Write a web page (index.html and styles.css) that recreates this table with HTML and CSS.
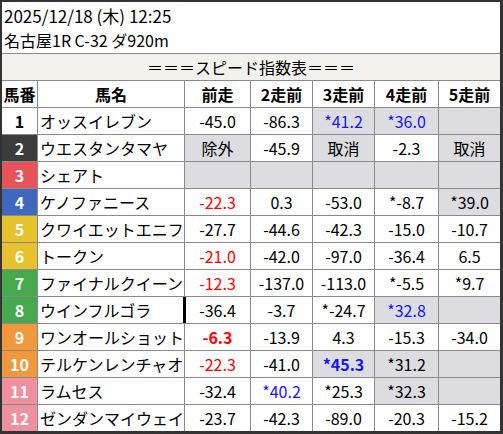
FILE: index.html
```html
<!DOCTYPE html>
<html lang="ja">
<head>
<meta charset="utf-8">
<title>スピード指数表</title>
<link rel="stylesheet" href="styles.css">
</head>
<body>
<div class="sheet">
  <div class="title">
    <div class="date">2025/12/18 (木) 12:25</div>
    <div class="race">名古屋1R C-32 ダ920m</div>
  </div>
  <div class="banner">＝＝＝スピード指数表＝＝＝</div>

  <div class="hd">馬番</div><div class="hd">馬名</div><div class="hd">前走</div><div class="hd">2走前</div><div class="hd">3走前</div><div class="hd">4走前</div><div class="hd">5走前</div>

  <div class="num w1">1</div><div class="name">オッスイレブン</div><div class="v">-45.0</div><div class="v">-86.3</div><div class="v g blue">*41.2</div><div class="v g blue">*36.0</div><div class="v g"></div>

  <div class="num w2">2</div><div class="name">ウエスタンタマヤ</div><div class="v g">除外</div><div class="v">-45.9</div><div class="v g">取消</div><div class="v">-2.3</div><div class="v g">取消</div>

  <div class="num w3">3</div><div class="name">シェアト</div><div class="v g"></div><div class="v g"></div><div class="v g"></div><div class="v g"></div><div class="v g"></div>

  <div class="num w4">4</div><div class="name">ケノファニース</div><div class="v red">-22.3</div><div class="v">0.3</div><div class="v">-53.0</div><div class="v">*-8.7</div><div class="v g">*39.0</div>

  <div class="num w5">5</div><div class="name">クワイエットエニフ</div><div class="v">-27.7</div><div class="v">-44.6</div><div class="v">-42.3</div><div class="v">-15.0</div><div class="v">-10.7</div>

  <div class="num w5">6</div><div class="name">トークン</div><div class="v red">-21.0</div><div class="v">-42.0</div><div class="v">-97.0</div><div class="v">-36.4</div><div class="v">6.5</div>

  <div class="num w7">7</div><div class="name">ファイナルクイーン</div><div class="v red">-12.3</div><div class="v">-137.0</div><div class="v">-113.0</div><div class="v">*-5.5</div><div class="v">*9.7</div>

  <div class="num w7">8</div><div class="name">ウインフルゴラ</div><div class="v mark">-36.4</div><div class="v">-3.7</div><div class="v">*-24.7</div><div class="v g blue">*32.8</div><div class="v g"></div>

  <div class="num w9">9</div><div class="name">ワンオールショット</div><div class="v red b">-6.3</div><div class="v">-13.9</div><div class="v">4.3</div><div class="v">-15.3</div><div class="v">-34.0</div>

  <div class="num w9">10</div><div class="name">テルケンレンチャオ</div><div class="v red">-22.3</div><div class="v">-41.0</div><div class="v g blue b">*45.3</div><div class="v g">*31.2</div><div class="v g"></div>

  <div class="num w11">11</div><div class="name">ラムセス</div><div class="v">-32.4</div><div class="v blue">*40.2</div><div class="v">*25.3</div><div class="v g">*32.3</div><div class="v g"></div>

  <div class="num w11">12</div><div class="name">ゼンダンマイウェイ</div><div class="v">-23.7</div><div class="v">-42.3</div><div class="v">-89.0</div><div class="v">-20.3</div><div class="v">-15.2</div>
</div>
</body>
</html>
```
FILE: styles.css
```css
html, body {
  margin: 0;
  padding: 0;
  background: #fff;
}
body {
  font-family: "Noto Sans CJK JP", "Noto Sans", sans-serif;
  color: #000;
}
.sheet {
  box-sizing: border-box;
  width: 503px;
  height: 434px;
  border-style: solid;
  border-color: #333;
  border-width: 2px 3px 3px 2px;
  background: #8a8a8a;
  display: grid;
  grid-template-columns: 35px 146px 65px 61px 61px 63px 61px;
  grid-template-rows: 51px repeat(14, 26px);
  gap: 1px;
}
.sheet > div {
  background: #fff;
  font-size: 16px;
  line-height: 26px;
  white-space: nowrap;
  overflow: hidden;
}
.sheet > .title {
  grid-column: 1 / -1;
  line-height: 25px;
  padding: 1px 0 0 2px;
}
.date {
  font-size: 17px;
}
.race {
  font-size: 16px;
}
.sheet > .banner {
  grid-column: 1 / -1;
  background: #f2f1ec;
  text-align: center;
}
.hd {
  font-weight: bold;
  text-align: center;
}
.num {
  font-weight: bold;
  text-align: center;
  color: #fff;
}
.sheet > .w1 { background: #fff; color: #000; }
.sheet > .w2 { background: #3c3c3c; }
.sheet > .w3 { background: #e8535a; }
.sheet > .w4 { background: #3e68bf; }
.sheet > .w5 { background: #e7c12e; }
.sheet > .w7 { background: #46a94d; }
.sheet > .w9 { background: #f0983b; }
.sheet > .w11 { background: #f0909f; }
.name {
  padding-left: 2px;
}
.v {
  text-align: center;
}
.sheet > .g {
  background: #dcdce1;
}
.red { color: #ff0000; }
.blue { color: #1515ff; }
.b { font-weight: bold; }
.sheet > .mark {
  overflow: visible;
  box-shadow: -2px 0 0 #000, inset 1px 0 0 #000;
}
```
